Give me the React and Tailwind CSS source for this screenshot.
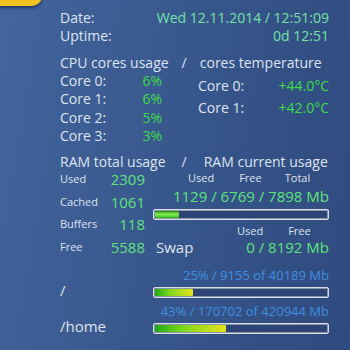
import React from 'react';

// Conky-style system monitor panel

const label = 'text-[#dde4ee]';
const mint = 'text-[#74e2a6]';
const green = 'text-[#3ddc47]';
const ramGreen = 'text-[#5fe27c]';
const blue = 'text-[#3f8fe0]';

const Bar = ({ pct, disk }) => (
  <div className="h-[11px] w-[176px] rounded-[2px] border border-[#d9dde4] bg-[#2c4576] p-[1px] shadow-[inset_0_0_0_1px_#8a97ab]">
    <div
      className={
        disk
          ? 'h-full rounded-[1px] bg-[linear-gradient(to_right,#1eaa12,#7ed81a_40%,#e8e21c)]'
          : 'h-full rounded-[1px] bg-[linear-gradient(to_bottom,#1c8a10,#8af055_45%,#2eb81c)]'
      }
      style={{ width: `${pct}%` }}
    />
  </div>
);

const App = () => {
  const cores = [
    ['Core 0:', '6%'],
    ['Core 1:', '6%'],
    ['Core 2:', '5%'],
    ['Core 3:', '3%'],
  ];
  const temps = [
    ['Core 0:', '+44.0°C'],
    ['Core 1:', '+42.0°C'],
  ];
  const ram = [
    ['Used', '2309'],
    ['Cached', '1061'],
    ['Buffers', '118'],
    ['Free', '5588'],
  ];

  return (
    <div
      className="relative h-[350px] w-[350px] overflow-hidden bg-[linear-gradient(100deg,#43659d,#36558a_55%,#2f4a7e)]"
      style={{ fontFamily: '"Open Sans", "Liberation Sans", sans-serif' }}
    >
      {/* yellow tab peeking in at the corner */}
      <div className="absolute -left-[20px] -top-[24px] h-[30px] w-[62px] rounded-[10px] bg-[#f3c21f] shadow-[0_2px_3px_rgba(20,30,60,0.6)]" />

      <div className="pl-[60px] pr-[21px] pt-[8px] text-[14px]">
        <div className="flex h-[18px] items-center justify-between">
          <span className={label}>Date:</span>
          <span className={mint}>Wed 12.11.2014 / 12:51:09</span>
        </div>
        <div className="flex h-[18px] items-center justify-between">
          <span className={label}>Uptime:</span>
          <span className={mint}>0d 12:51</span>
        </div>

        <div className={`mt-[9px] flex h-[18px] items-center ${label}`}>
          <span>CPU cores usage</span>
          <span className="ml-[13px]">/</span>
          <span className="ml-[13px]">cores temperature</span>
        </div>

        <div className="flex">
          <div className="w-[102px]">
            {cores.map(([k, v]) => (
              <div key={k} className="flex h-[18.5px] items-center justify-between">
                <span className={label}>{k}</span>
                <span className={green}>{v}</span>
              </div>
            ))}
          </div>
          <div className="ml-[36px] flex-1 pt-[3px]">
            {temps.map(([k, v]) => (
              <div key={k} className="flex h-[22px] items-center justify-between">
                <span className={label}>{k}</span>
                <span className={green}>{v}</span>
              </div>
            ))}
          </div>
        </div>

        <div className={`mt-[7px] flex h-[18px] items-center ${label}`}>
          <span>RAM total usage</span>
          <span className="ml-[16px]">/</span>
          <span className="ml-[17px]">RAM current usage</span>
        </div>

        <div className="flex">
          <div className="-mt-[2px] w-[86px]">
            {ram.map(([k, v]) => (
              <div key={k} className="flex h-[22.7px] items-center justify-between">
                <span className={`text-[11px] ${label}`}>{k}</span>
                <span className={`text-[15px] ${ramGreen}`}>{v}</span>
              </div>
            ))}
          </div>
          <div className="ml-[8px] flex-1">
            <div className={`flex h-[16px] items-center text-[11px] ${label}`}>
              <span className="ml-[35px]">Used</span>
              <span className="ml-[25px]">Free</span>
              <span className="ml-[23px]">Total</span>
            </div>
            <div className={`flex h-[20px] items-center justify-end text-[15px] ${ramGreen}`}>
              1129 / 6769 / 7898 Mb
            </div>
            <div className="mt-[3px]">
              <Bar pct={14} />
            </div>
            <div className={`mt-[4px] flex h-[14px] items-center text-[11px] ${label}`}>
              <span className="ml-[84px]">Used</span>
              <span className="ml-[25px]">Free</span>
            </div>
            <div className="flex h-[18px] items-center justify-between">
              <span className={`ml-[3px] text-[15px] ${label}`}>Swap</span>
              <span className={`text-[15px] ${ramGreen}`}>0 / 8192 Mb</span>
            </div>
          </div>
        </div>

        <div className="mt-[9px] flex items-end">
          <span className={`mb-[-4px] w-[94px] text-[15px] ${label}`}>/</span>
          <div className="flex-1">
            <div className={`flex h-[16px] items-center justify-end text-[13px] ${blue}`}>
              25% / 9155 of 40189 Mb
            </div>
            <div className="mt-[3px]">
              <Bar pct={22} disk />
            </div>
          </div>
        </div>

        <div className="mt-[6px] flex items-end">
          <span className={`mb-[-4px] w-[94px] text-[15px] ${label}`}>/home</span>
          <div className="flex-1">
            <div className={`flex h-[16px] items-center justify-end text-[13px] ${blue}`}>
              43% / 170702 of 420944 Mb
            </div>
            <div className="mt-[3px]">
              <Bar pct={41} disk />
            </div>
          </div>
        </div>
      </div>
    </div>
  );
};

export default App;
